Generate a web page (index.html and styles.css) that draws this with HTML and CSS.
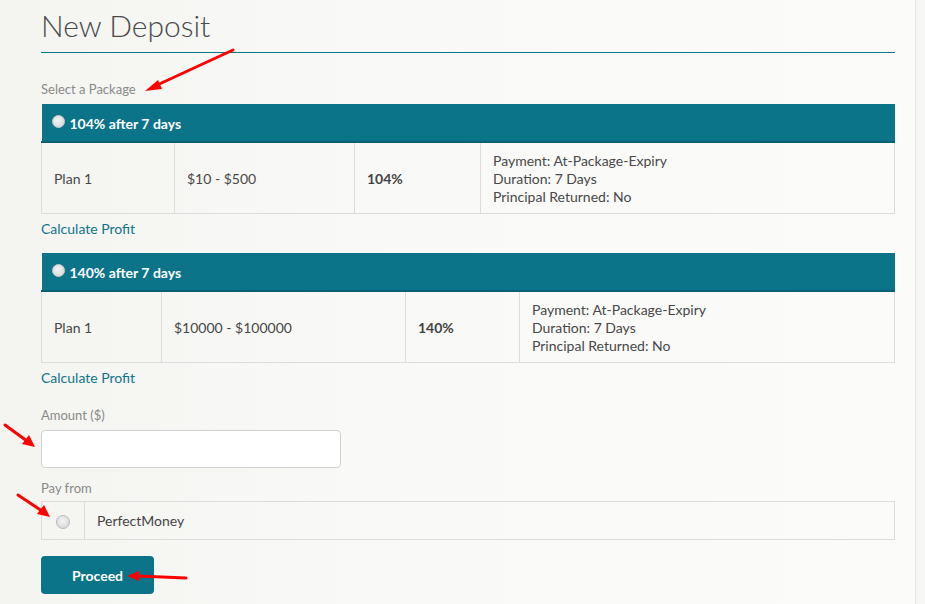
FILE: index.html
```html
<!DOCTYPE html>
<html>
<head>
<meta charset="utf-8">
<link rel="stylesheet" href="styles.css">
</head>
<body>
<div class="page">
  <main class="main">
    <h1 class="title">New Deposit</h1>
    <div class="label first">Select a Package</div>

    <table class="pkg pkg1">
      <thead>
        <tr><th colspan="4"><span class="radio"></span>104% after 7 days</th></tr>
      </thead>
      <tbody>
        <tr>
          <td class="c1">Plan 1</td>
          <td class="c2">$10 - $500</td>
          <td class="c3"><b>104%</b></td>
          <td class="c4">Payment: At-Package-Expiry<br>Duration: 7 Days<br>Principal Returned: No</td>
        </tr>
      </tbody>
    </table>
    <a class="calc" href="#">Calculate Profit</a>

    <table class="pkg pkg2">
      <thead>
        <tr><th colspan="4"><span class="radio"></span>140% after 7 days</th></tr>
      </thead>
      <tbody>
        <tr>
          <td class="c1">Plan 1</td>
          <td class="c2">$10000 - $100000</td>
          <td class="c3"><b>140%</b></td>
          <td class="c4">Payment: At-Package-Expiry<br>Duration: 7 Days<br>Principal Returned: No</td>
        </tr>
      </tbody>
    </table>
    <a class="calc" href="#">Calculate Profit</a>

    <div class="label amount-label">Amount ($)</div>
    <input class="amount" type="text">

    <div class="label pay-label">Pay from</div>
    <table class="pay">
      <tr>
        <td class="pay-radio"><span class="radio big"></span></td>
        <td class="pay-name">PerfectMoney</td>
      </tr>
    </table>

    <button class="btn">Proceed</button>
  </main>
  <aside class="side"></aside>
</div>

<svg class="arrows" width="925" height="604" viewBox="0 0 925 604">
  <g stroke="#f00" stroke-width="3" fill="#f00" stroke-linecap="round">
    <line x1="233" y1="50" x2="155" y2="86"/>
    <polygon stroke="none" points="145,91 158,80 162,89"/>
    <line x1="5" y1="425" x2="27" y2="441"/>
    <polygon stroke="none" points="35,447 22,444 29,435"/>
    <line x1="18" y1="495" x2="42" y2="511"/>
    <polygon stroke="none" points="50,517 37,514 44,505"/>
    <line x1="186" y1="578" x2="138" y2="576"/>
    <polygon stroke="none" points="127,576 139,571 139,581"/>
  </g>
</svg>
</body>
</html>
```

FILE: styles.css
```css
html, body {
  margin: 0;
  padding: 0;
}
body {
  width: 925px;
  height: 604px;
  overflow: hidden;
  font-family: "Lato", "Liberation Sans", sans-serif;
  font-size: 14px;
  color: #444;
  background: linear-gradient(to right, #f4f4f1 0%, #f9f9f7 40%, #fbfbfa 100%);
  position: relative;
}
.page {
  display: flex;
  height: 604px;
}
.main {
  width: 854px;
  padding: 0 20px 0 41px;
  border-right: 1px solid #e6e6e4;
}
.side {
  flex: 1;
  background: #f7f7f5;
}
.title {
  margin: 0;
  font-weight: 300;
  font-size: 30px;
  line-height: 50px;
  color: #4a4a4a;
  border-bottom: 1px solid #0e7489;
  height: 53px;
  box-sizing: border-box;
}
.label {
  font-size: 13px;
  color: #8a8a8a;
  line-height: 18px;
}
.label.first {
  margin-top: 27px;
  margin-bottom: 6px;
}
.pkg {
  width: 100%;
  border-collapse: collapse;
}
.pkg th {
  background: #0c7489;
  color: #fff;
  text-align: left;
  font-weight: 700;
  font-size: 14px;
  height: 36px;
  padding: 1px 0 0 10px;
  border-bottom: 2px solid #0a6072;
}
.radio {
  display: inline-block;
  width: 11px;
  height: 11px;
  border-radius: 50%;
  background: radial-gradient(circle at 45% 40%, #f4f4f4 0%, #dcdcdc 70%, #c8c8c8 100%);
  border: 1px solid #b9b9b9;
  margin-right: 5px;
  vertical-align: -1px;
}
.pkg th .radio {
  vertical-align: 1px;
  border-color: #c8c8c8;
}
.pkg td {
  border: 1px solid #dcdcda;
  border-top: none;
  padding: 2px 12px 0;
  height: 68px;
  vertical-align: middle;
  line-height: 18px;
  color: #484848;
}
.pkg td b {
  font-weight: 700;
  color: #444;
}
.pkg1 .c1 { width: 108px; }
.pkg1 .c2 { width: 155px; }
.pkg1 .c3 { width: 101px; }
.pkg2 .c1 { width: 95px; }
.pkg2 .c2 { width: 219px; }
.pkg2 .c3 { width: 89px; }
.calc {
  display: block;
  color: #0e7489;
  text-decoration: none;
  line-height: 18px;
  margin-top: 6px;
  margin-bottom: 15px;
}
.amount-label {
  padding-top: 4px;
  margin-bottom: 6px;
}
.amount {
  display: block;
  width: 300px;
  height: 38px;
  box-sizing: border-box;
  border: 1px solid #d0d0d0;
  border-radius: 4px;
  background: #fff;
  margin: 0;
}
.pay-label {
  margin-top: 11px;
  margin-bottom: 4px;
}
.pay {
  width: 100%;
  border-collapse: collapse;
}
.pay td {
  border: 1px solid #dcdcda;
  height: 37px;
  padding: 0;
  vertical-align: middle;
}
.pay-radio {
  width: 42px;
  text-align: center;
}
.radio.big {
  width: 12px;
  height: 12px;
  margin: 0;
  vertical-align: middle;
}
.pay-name {
  padding-left: 12px !important;
  color: #444;
}
.btn {
  display: block;
  margin-top: 16px;
  width: 113px;
  height: 38px;
  border: none;
  border-radius: 4px;
  background: #0c7489;
  color: #fff;
  font-family: "Lato", "Liberation Sans", sans-serif;
  font-size: 14px;
  font-weight: 700;
  padding: 0;
}
.arrows {
  position: absolute;
  left: 0;
  top: 0;
  pointer-events: none;
}
```
